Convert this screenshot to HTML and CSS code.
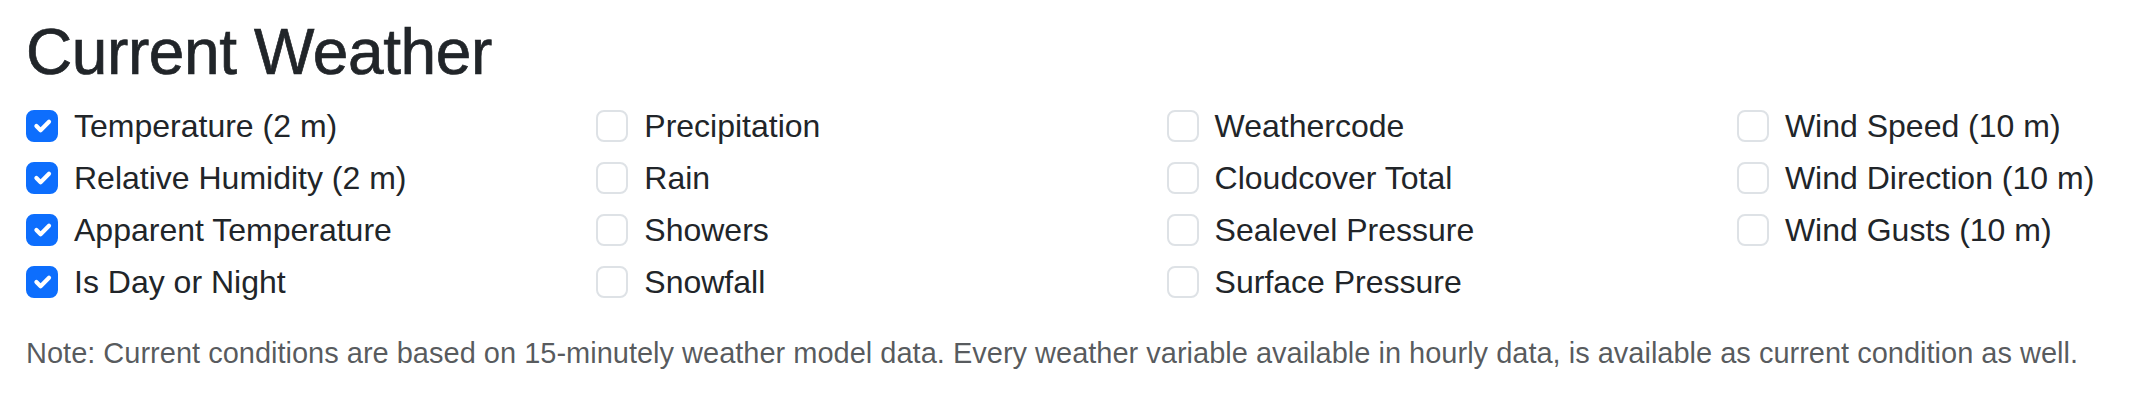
FILE: index.html
```html
<!DOCTYPE html>
<html lang="en">
<head>
<meta charset="utf-8">
<title>Current Weather</title>
<link rel="stylesheet" href="styles.css">
</head>
<body>
<div class="page">
  <h2 class="title">Current Weather</h2>
  <div class="grid">
    <div class="col">
      <label class="check"><span class="box on"><svg viewBox="0 0 20 20"><path d="m6 10 3 3 6-6"/></svg></span><span>Temperature (2 m)</span></label>
      <label class="check"><span class="box on"><svg viewBox="0 0 20 20"><path d="m6 10 3 3 6-6"/></svg></span><span>Relative Humidity (2 m)</span></label>
      <label class="check"><span class="box on"><svg viewBox="0 0 20 20"><path d="m6 10 3 3 6-6"/></svg></span><span>Apparent Temperature</span></label>
      <label class="check"><span class="box on"><svg viewBox="0 0 20 20"><path d="m6 10 3 3 6-6"/></svg></span><span>Is Day or Night</span></label>
    </div>
    <div class="col">
      <label class="check"><span class="box"></span><span>Precipitation</span></label>
      <label class="check"><span class="box"></span><span>Rain</span></label>
      <label class="check"><span class="box"></span><span>Showers</span></label>
      <label class="check"><span class="box"></span><span>Snowfall</span></label>
    </div>
    <div class="col">
      <label class="check"><span class="box"></span><span>Weathercode</span></label>
      <label class="check"><span class="box"></span><span>Cloudcover Total</span></label>
      <label class="check"><span class="box"></span><span>Sealevel Pressure</span></label>
      <label class="check"><span class="box"></span><span>Surface Pressure</span></label>
    </div>
    <div class="col">
      <label class="check"><span class="box"></span><span>Wind Speed (10 m)</span></label>
      <label class="check"><span class="box"></span><span>Wind Direction (10 m)</span></label>
      <label class="check"><span class="box"></span><span>Wind Gusts (10 m)</span></label>
    </div>
  </div>
  <p class="note">Note: Current conditions are based on 15-minutely weather model data. Every weather variable available in hourly data, is available as current condition as well.</p>
</div>
</body>
</html>
```
FILE: styles.css
```css
* { box-sizing: border-box; }
html, body { margin: 0; padding: 0; background: #fff; }
body {
  font-family: "Liberation Sans", Arial, Helvetica, sans-serif;
  color: #212529;
  font-size: 32px;
  line-height: 1.5;
}
.page {
  padding: 14px 0 0 26px;
  overflow: hidden;
  width: 2148px;
}
.title {
  margin: 0 0 11px 0;
  font-size: 64px;
  font-weight: 500;
  line-height: 1.2;
  letter-spacing: -0.4px;
  -webkit-text-stroke: 0.7px #212529;
}
.grid {
  display: grid;
  grid-template-columns: repeat(4, 570.3px);
}
.col {
  display: flex;
  flex-direction: column;
}
.check {
  display: flex;
  align-items: flex-start;
  min-height: 48px;
  margin-bottom: 4px;
  gap: 16px;
}
.box {
  flex: none;
  width: 32px;
  height: 32px;
  margin-top: 8px;
  border: 2px solid #dee2e6;
  border-radius: 8px;
  background: #fff;
  display: flex;
}
.box.on {
  background: #0d6efd;
  border-color: #0d6efd;
}
.box svg {
  width: 100%;
  height: 100%;
  fill: none;
  stroke: #fff;
  stroke-width: 3;
  stroke-linecap: round;
  stroke-linejoin: round;
}
.note {
  margin: 22px 0 0 0;
  font-size: 29px;
  line-height: 1.5;
  color: rgba(33, 37, 41, 0.75);
}
```
